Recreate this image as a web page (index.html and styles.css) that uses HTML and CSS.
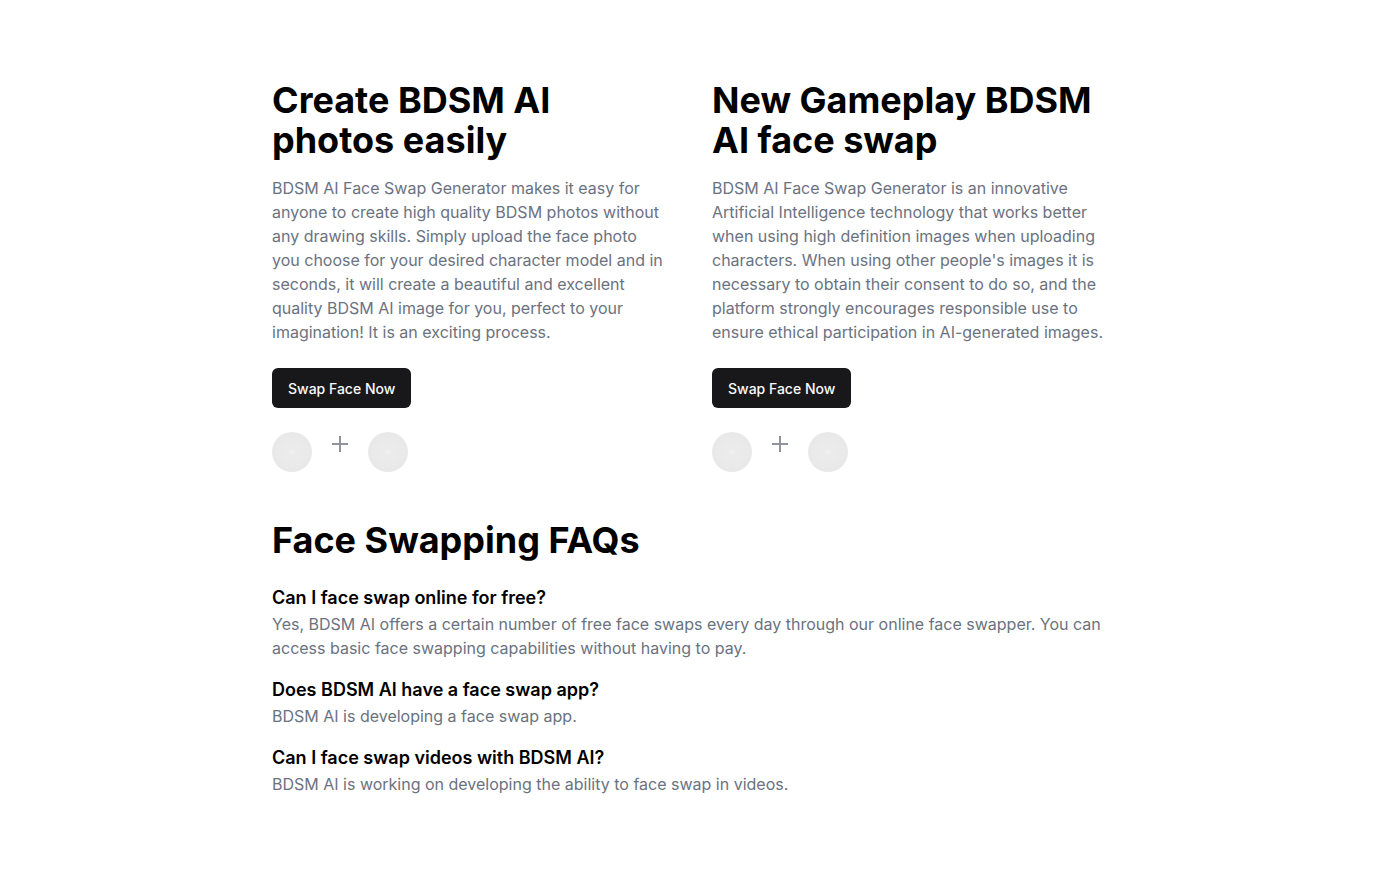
FILE: index.html
```html
<!DOCTYPE html>
<html lang="en">
<head>
<meta charset="utf-8">
<title>BDSM AI Face Swap</title>
<link rel="stylesheet" href="styles.css">
</head>
<body>
<main class="page">
  <section class="features">
    <div class="feature">
      <h2 class="feature-title">Create BDSM AI photos easily</h2>
      <p class="feature-text">BDSM AI Face Swap Generator makes it easy for anyone to create high quality BDSM photos without any drawing skills. Simply upload the face photo you choose for your desired character model and in seconds, it will create a beautiful and excellent quality BDSM AI image for you, perfect to your imagination! It is an exciting process.</p>
      <a class="btn" href="#">Swap Face Now</a>
      <div class="swap-row">
        <span class="avatar"></span>
        <span class="plus"><svg width="16" height="16" viewBox="0 0 16 16"><path d="M8 0v16M0 8h16" stroke="#8f949b" stroke-width="2" fill="none"/></svg></span>
        <span class="avatar"></span>
      </div>
    </div>
    <div class="feature">
      <h2 class="feature-title">New Gameplay BDSM AI face swap</h2>
      <p class="feature-text">BDSM AI Face Swap Generator is an innovative Artificial Intelligence technology that works better when using high definition images when uploading characters. When using other people's images it is necessary to obtain their consent to do so, and the platform strongly encourages responsible use to ensure ethical participation in AI-generated images.</p>
      <a class="btn" href="#">Swap Face Now</a>
      <div class="swap-row">
        <span class="avatar"></span>
        <span class="plus"><svg width="16" height="16" viewBox="0 0 16 16"><path d="M8 0v16M0 8h16" stroke="#8f949b" stroke-width="2" fill="none"/></svg></span>
        <span class="avatar"></span>
      </div>
    </div>
  </section>
  <section class="faq">
    <h2 class="faq-title">Face Swapping FAQs</h2>
    <div class="faq-item">
      <h3 class="faq-q">Can I face swap online for free?</h3>
      <p class="faq-a">Yes, BDSM AI offers a certain number of free face swaps every day through our online face swapper. You can access basic face swapping capabilities without having to pay.</p>
    </div>
    <div class="faq-item">
      <h3 class="faq-q">Does BDSM AI have a face swap app?</h3>
      <p class="faq-a">BDSM AI is developing a face swap app.</p>
    </div>
    <div class="faq-item">
      <h3 class="faq-q">Can I face swap videos with BDSM AI?</h3>
      <p class="faq-a">BDSM AI is working on developing the ability to face swap in videos.</p>
    </div>
  </section>
</main>
</body>
</html>
```

FILE: styles.css
```css
* { box-sizing: border-box; }
html, body { margin: 0; padding: 0; background: #fff; }
body {
  font-family: Inter, "Noto Sans", "Liberation Sans", sans-serif;
  color: #000;
}
.page {
  width: 832px;
  margin: 0 auto;
  padding-top: 80px;
}
.features {
  display: grid;
  grid-template-columns: 392px 392px;
  column-gap: 48px;
}
.feature { display: flex; flex-direction: column; align-items: flex-start; }
.feature-title {
  margin: 0;
  font-size: 36px;
  line-height: 40px;
  font-weight: 700;
}
.feature-text {
  margin: 16px 0 0;
  font-size: 16px;
  line-height: 24px;
  color: #6b7280;
}
.btn {
  margin-top: 24px;
  display: inline-flex;
  align-items: center;
  height: 40px;
  padding: 0 16px;
  background: #18181b;
  color: #fafafa;
  border-radius: 6px;
  font-size: 14px;
  font-weight: 500;
  text-decoration: none;
}
.swap-row {
  margin-top: 24px;
  display: flex;
  align-items: flex-start;
  gap: 16px;
}
.avatar {
  width: 40px;
  height: 40px;
  border-radius: 50%;
  background: radial-gradient(circle at center, #f3f3f3 0, #ececec 3px, #e8e8e8 20px);
}
.plus {
  width: 24px;
  height: 24px;
  display: flex;
  align-items: center;
  justify-content: center;
}
.faq { margin-top: 48px; }
.faq-title {
  margin: 0;
  font-size: 36px;
  line-height: 40px;
  font-weight: 700;
}
.faq-item { margin-top: 16px; }
.faq-item:first-of-type { margin-top: 24px; }
.faq-q {
  margin: 0;
  font-size: 18px;
  line-height: 28px;
  font-weight: 600;
}
.faq-a {
  margin: 0;
  font-size: 16px;
  line-height: 24px;
  color: #6b7280;
}
```
